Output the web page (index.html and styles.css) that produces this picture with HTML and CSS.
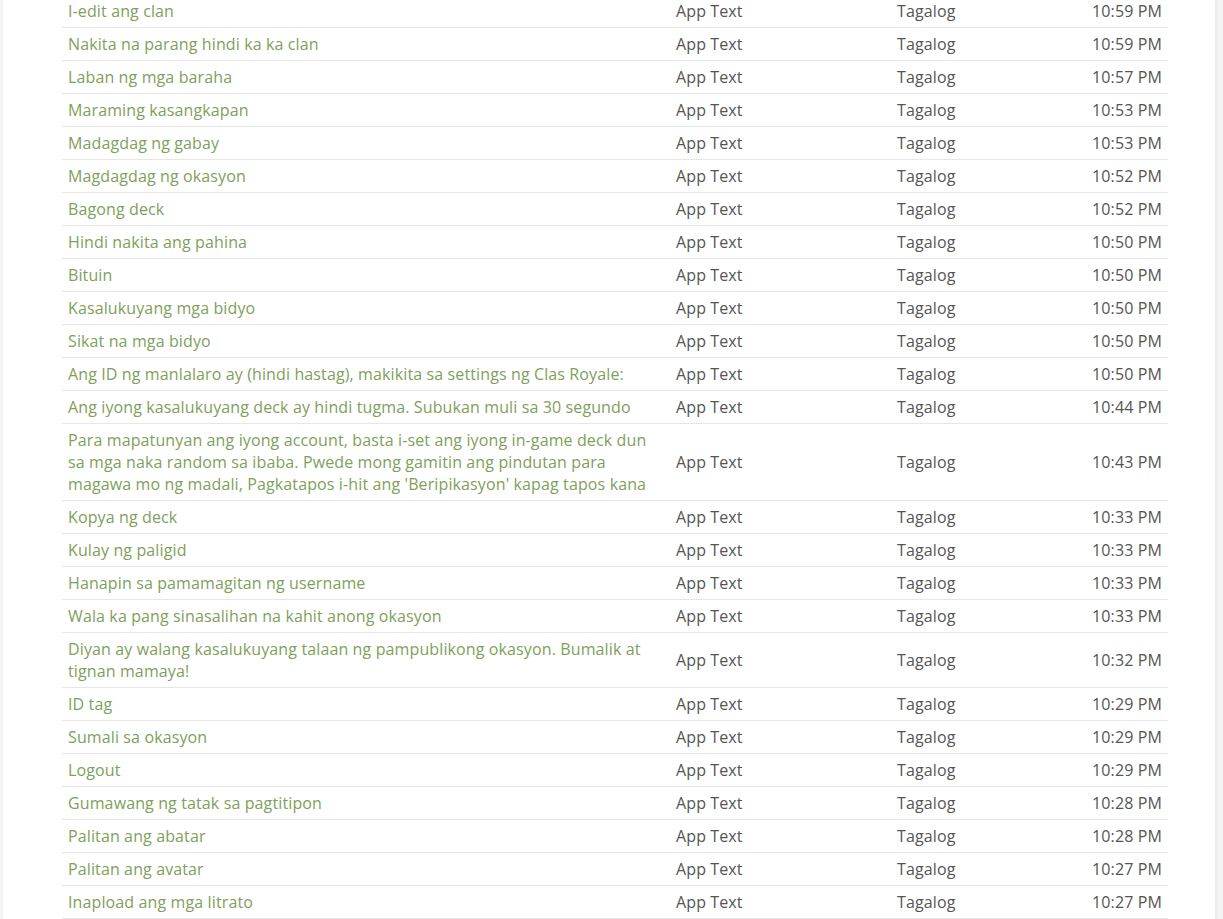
FILE: index.html
```html
<!DOCTYPE html>
<html lang="en">
<head>
    <meta charset="UTF-8">
    <meta name="viewport" content="width=device-width, initial-scale=1.0">
    <title>Translations</title>
    <link rel="stylesheet" href="styles.css">
</head>
<body>
    <div class="panel">
        <table class="strings">
            <colgroup>
                <col class="col-text">
                <col class="col-type">
                <col class="col-lang">
                <col class="col-time">
            </colgroup>
            <tbody>
                <tr><td class="label">I-edit ang clan</td><td>App Text</td><td>Tagalog</td><td class="time">10:59 PM</td></tr>
                <tr><td class="label">Nakita na parang hindi ka ka clan</td><td>App Text</td><td>Tagalog</td><td class="time">10:59 PM</td></tr>
                <tr><td class="label">Laban ng mga baraha</td><td>App Text</td><td>Tagalog</td><td class="time">10:57 PM</td></tr>
                <tr><td class="label">Maraming kasangkapan</td><td>App Text</td><td>Tagalog</td><td class="time">10:53 PM</td></tr>
                <tr><td class="label">Madagdag ng gabay</td><td>App Text</td><td>Tagalog</td><td class="time">10:53 PM</td></tr>
                <tr><td class="label">Magdagdag ng okasyon</td><td>App Text</td><td>Tagalog</td><td class="time">10:52 PM</td></tr>
                <tr><td class="label">Bagong deck</td><td>App Text</td><td>Tagalog</td><td class="time">10:52 PM</td></tr>
                <tr><td class="label">Hindi nakita ang pahina</td><td>App Text</td><td>Tagalog</td><td class="time">10:50 PM</td></tr>
                <tr><td class="label">Bituin</td><td>App Text</td><td>Tagalog</td><td class="time">10:50 PM</td></tr>
                <tr><td class="label">Kasalukuyang mga bidyo</td><td>App Text</td><td>Tagalog</td><td class="time">10:50 PM</td></tr>
                <tr><td class="label">Sikat na mga bidyo</td><td>App Text</td><td>Tagalog</td><td class="time">10:50 PM</td></tr>
                <tr><td class="label">Ang ID ng manlalaro ay (hindi hastag), makikita sa settings ng Clas Royale:</td><td>App Text</td><td>Tagalog</td><td class="time">10:50 PM</td></tr>
                <tr><td class="label">Ang iyong kasalukuyang deck ay hindi tugma. Subukan muli sa 30 segundo</td><td>App Text</td><td>Tagalog</td><td class="time">10:44 PM</td></tr>
                <tr><td class="label">Para mapatunyan ang iyong account, basta i-set ang iyong in-game deck dun sa mga naka random sa ibaba. Pwede mong gamitin ang pindutan para magawa mo ng madali, Pagkatapos i-hit ang 'Beripikasyon' kapag tapos kana</td><td>App Text</td><td>Tagalog</td><td class="time">10:43 PM</td></tr>
                <tr><td class="label">Kopya ng deck</td><td>App Text</td><td>Tagalog</td><td class="time">10:33 PM</td></tr>
                <tr><td class="label">Kulay ng paligid</td><td>App Text</td><td>Tagalog</td><td class="time">10:33 PM</td></tr>
                <tr><td class="label">Hanapin sa pamamagitan ng username</td><td>App Text</td><td>Tagalog</td><td class="time">10:33 PM</td></tr>
                <tr><td class="label">Wala ka pang sinasalihan na kahit anong okasyon</td><td>App Text</td><td>Tagalog</td><td class="time">10:33 PM</td></tr>
                <tr><td class="label">Diyan ay walang kasalukuyang talaan ng pampublikong okasyon. Bumalik at tignan mamaya!</td><td>App Text</td><td>Tagalog</td><td class="time">10:32 PM</td></tr>
                <tr><td class="label">ID tag</td><td>App Text</td><td>Tagalog</td><td class="time">10:29 PM</td></tr>
                <tr><td class="label">Sumali sa okasyon</td><td>App Text</td><td>Tagalog</td><td class="time">10:29 PM</td></tr>
                <tr><td class="label">Logout</td><td>App Text</td><td>Tagalog</td><td class="time">10:29 PM</td></tr>
                <tr><td class="label">Gumawang ng tatak sa pagtitipon</td><td>App Text</td><td>Tagalog</td><td class="time">10:28 PM</td></tr>
                <tr><td class="label">Palitan ang abatar</td><td>App Text</td><td>Tagalog</td><td class="time">10:28 PM</td></tr>
                <tr><td class="label">Palitan ang avatar</td><td>App Text</td><td>Tagalog</td><td class="time">10:27 PM</td></tr>
                <tr><td class="label">Inapload ang mga litrato</td><td>App Text</td><td>Tagalog</td><td class="time">10:27 PM</td></tr>
            </tbody>
        </table>
    </div>
</body>
</html>
```

FILE: styles.css
```css
body {
    margin: 0;
    background-color: #f4f4f4;
    font-family: "Open Sans", "Liberation Sans", sans-serif;
    font-size: 16px;
    letter-spacing: 0.12px;
    color: #555;
    overflow: hidden;
}
.panel {
    width: 1212px;
    margin: -5px 0 0 3px;
    padding: 0 47px 0 59px;
    box-sizing: border-box;
    background-color: #fff;
    box-shadow: 1px 0 4px rgba(0, 0, 0, 0.06);
    min-height: 960px;
}
.strings {
    width: 1106px;
    border-collapse: collapse;
    table-layout: fixed;
}
.col-text { width: 608px; }
.col-type { width: 221px; }
.col-lang { width: 149px; }
.col-time { width: 128px; }
.strings td {
    padding: 5px 6px;
    line-height: 22px;
    vertical-align: middle;
    border-top: 1px solid #e6e6e6;
}
.strings tr:first-child td {
    border-top: none;
}
.strings tr:last-child td {
    border-bottom: 1px solid #e6e6e6;
}
.strings .label {
    color: #80a05c;
}
.strings .time {
    text-align: right;
}
```
